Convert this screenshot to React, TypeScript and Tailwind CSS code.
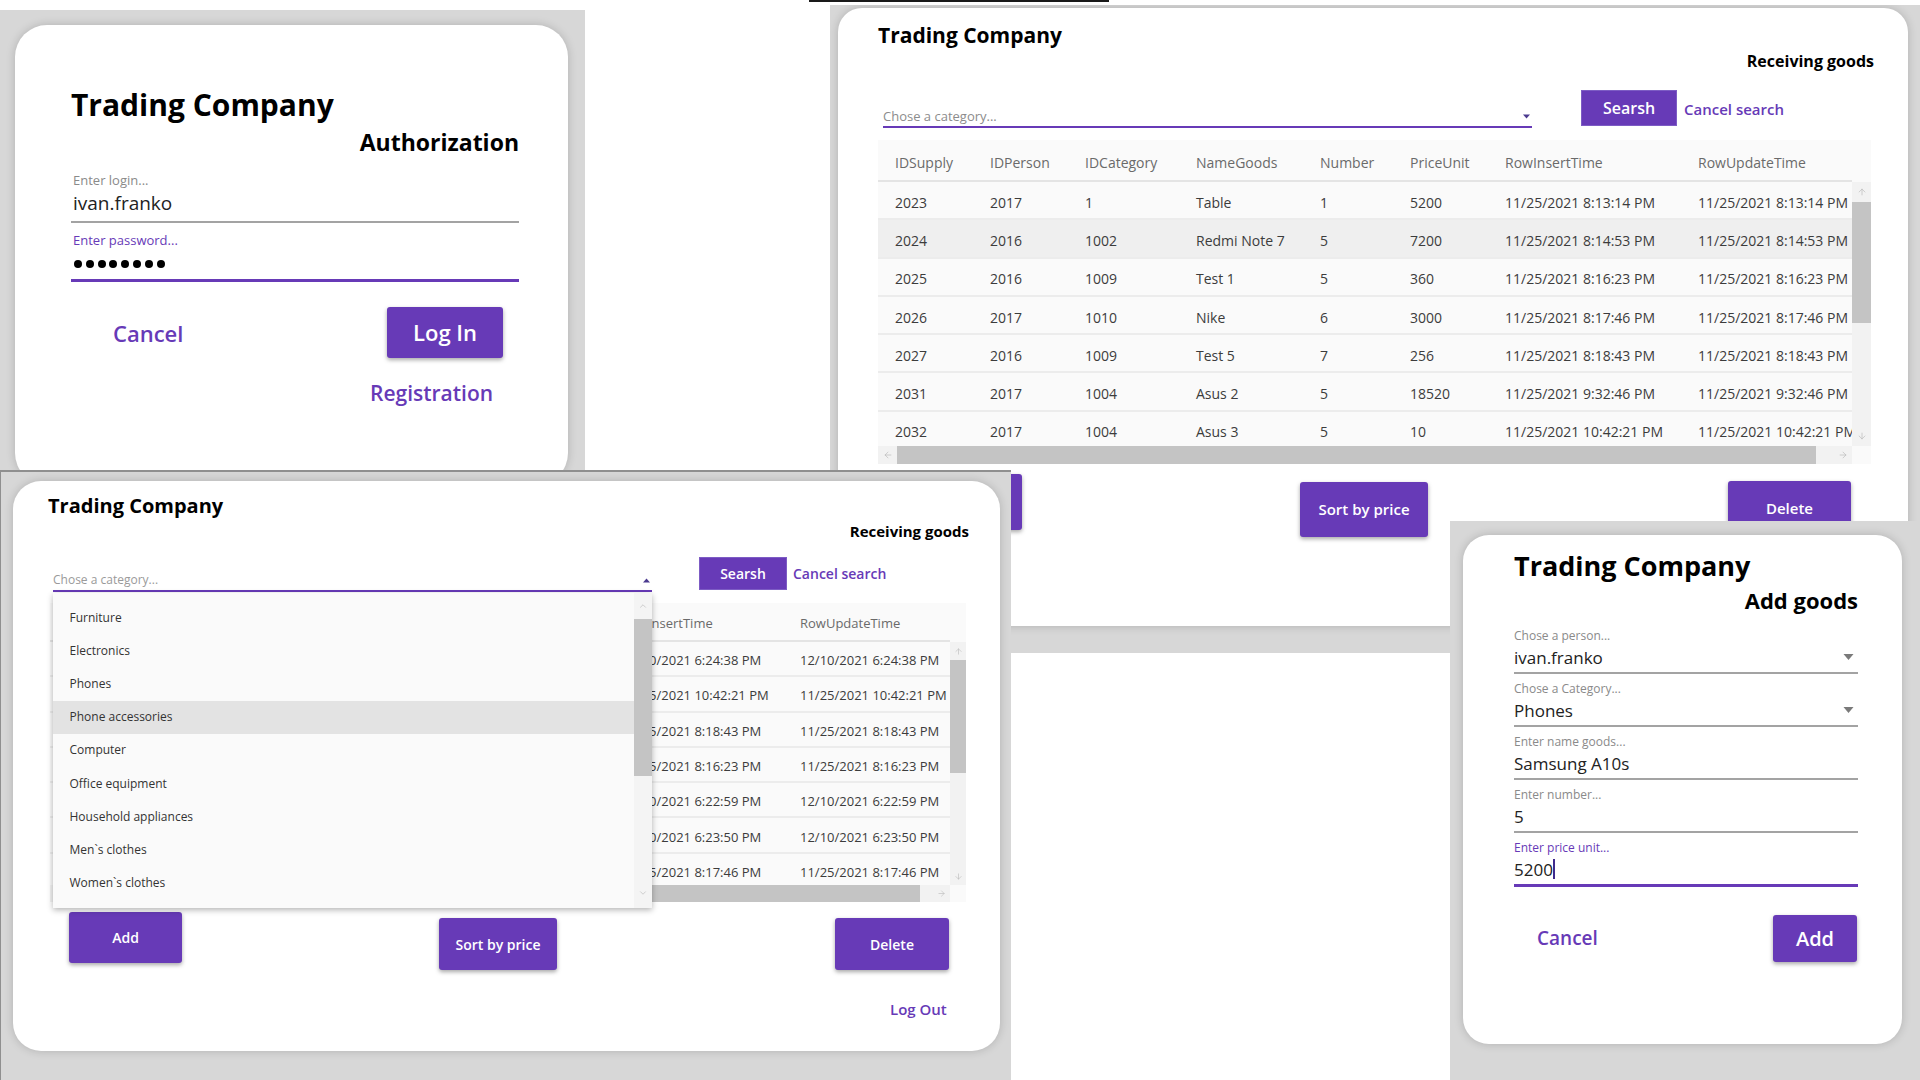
import { ArrowUp, ArrowDown, ArrowLeft, ArrowRight, ChevronUp, ChevronDown } from "lucide-react";

const bigHead = ["IDSupply", "IDPerson", "IDCategory", "NameGoods", "Number", "PriceUnit", "RowInsertTime", "RowUpdateTime"];

const bigRows = [
  ["2023", "2017", "1", "Table", "1", "5200", "11/25/2021 8:13:14 PM", "11/25/2021 8:13:14 PM"],
  ["2024", "2016", "1002", "Redmi Note 7", "5", "7200", "11/25/2021 8:14:53 PM", "11/25/2021 8:14:53 PM"],
  ["2025", "2016", "1009", "Test 1", "5", "360", "11/25/2021 8:16:23 PM", "11/25/2021 8:16:23 PM"],
  ["2026", "2017", "1010", "Nike", "6", "3000", "11/25/2021 8:17:46 PM", "11/25/2021 8:17:46 PM"],
  ["2027", "2016", "1009", "Test 5", "7", "256", "11/25/2021 8:18:43 PM", "11/25/2021 8:18:43 PM"],
  ["2031", "2017", "1004", "Asus 2", "5", "18520", "11/25/2021 9:32:46 PM", "11/25/2021 9:32:46 PM"],
  ["2032", "2017", "1004", "Asus 3", "5", "10", "11/25/2021 10:42:21 PM", "11/25/2021 10:42:21 PM"],
];

// only the two right-hand columns show past the open dropdown
const smallRows = [
  ["12/10/2021 6:24:38 PM", "12/10/2021 6:24:38 PM"],
  ["11/25/2021 10:42:21 PM", "11/25/2021 10:42:21 PM"],
  ["11/25/2021 8:18:43 PM", "11/25/2021 8:18:43 PM"],
  ["11/25/2021 8:16:23 PM", "11/25/2021 8:16:23 PM"],
  ["12/10/2021 6:22:59 PM", "12/10/2021 6:22:59 PM"],
  ["12/10/2021 6:23:50 PM", "12/10/2021 6:23:50 PM"],
  ["11/25/2021 8:17:46 PM", "11/25/2021 8:17:46 PM"],
];

const categories = [
  "Furniture",
  "Electronics",
  "Phones",
  "Phone accessories",
  "Computer",
  "Office equipment",
  "Household appliances",
  "Men`s clothes",
  "Women`s clothes",
];

function Triangle({ up, className }: { up?: boolean; className: string }) {
  return (
    <svg viewBox="0 0 10 6" className={className}>
      <polygon points={up ? "0,6 10,6 5,0" : "0,0 10,0 5,6"} fill="currentColor" />
    </svg>
  );
}

function LoginWindow() {
  return (
    <div className="absolute left-0 top-[10px] w-[585px] h-[460px] bg-[#d7d7d7] overflow-hidden">
      <div className="ml-[15px] mt-[15px] w-[553px] h-[460px] rounded-[32px] bg-white shadow-[0_0_10px_rgba(0,0,0,0.18)] pl-[56px] pr-[49px] pt-[65px]">
        <div className="text-[30px] leading-none font-bold text-black">Trading Company</div>
        <div className="mt-[11px] text-right text-[23px] leading-none font-bold text-black">Authorization</div>
        <div className="mt-[20px] pl-[2px] text-[13px] leading-none text-[#8a8a8a]">Enter login...</div>
        <div className="mt-[7px] pl-[2px] text-[19px] leading-none text-[#222]">ivan.franko</div>
        <div className="mt-[8px] h-[2px] bg-[#a3a3a3]" />
        <div className="mt-[11px] pl-[2px] text-[13px] leading-none text-[#673ab7]">Enter password...</div>
        <div className="mt-[13px] pl-[3px] flex gap-[3.8px]">
          {Array.from({ length: 8 }).map((_, i) => (
            <span key={i} className="w-[8px] h-[8px] rounded-full bg-black" />
          ))}
        </div>
        <div className="mt-[11px] h-[3px] bg-[#673ab7]" />
        <div className="mt-[25px] flex items-center justify-between pl-[42px] pr-[16px]">
          <span className="text-[22px] leading-none font-semibold text-[#673ab7]">Cancel</span>
          <button className="w-[116px] h-[51px] rounded-[3px] bg-[#673ab7] text-white text-[22px] font-semibold shadow-[0_2px_4px_rgba(0,0,0,0.35)]">
            Log In
          </button>
        </div>
        <div className="mt-[25px] ml-[299px] text-[21px] leading-none font-semibold text-[#673ab7]">Registration</div>
      </div>
    </div>
  );
}

function BigTable() {
  return (
    <div className="w-[993px] h-[324px] bg-[#fafafa] flex flex-col">
      <div className="h-[42px] w-[974px] shrink-0 border-b-2 border-[#e4e4e4] grid grid-cols-[95px_95px_111px_124px_90px_95px_193px_1fr] pl-[17px] pt-[5px] items-center text-[14px] text-[#6a6a6a]">
        {bigHead.map((h) => (
          <div key={h} className="whitespace-nowrap leading-[20px]">
            {h}
          </div>
        ))}
      </div>
      <div className="flex h-[264px]">
        <div className="w-[974px] overflow-hidden">
          {bigRows.map((r, i) => (
            <div
              key={i}
              className={`h-[38.3px] border-b-2 border-[#ececec] grid grid-cols-[95px_95px_111px_124px_90px_95px_193px_1fr] pl-[17px] pt-[5px] items-center text-[14px] text-[#3c3c3c] ${
                i === 1 ? "bg-[#efefef]" : ""
              }`}
            >
              {r.map((c, j) => (
                <div key={j} className="whitespace-nowrap leading-[20px]">
                  {c}
                </div>
              ))}
            </div>
          ))}
        </div>
        <div className="w-[19px] bg-[#f2f2f2] flex flex-col items-center">
          <div className="h-[20px] flex items-center justify-center">
            <ArrowUp size={10} strokeWidth={1.5} className="text-[#b5b5b5]" />
          </div>
          <div className="w-[19px] h-[121px] bg-[#c4c4c4]" />
          <div className="flex-1" />
          <div className="h-[20px] flex items-center justify-center">
            <ArrowDown size={10} strokeWidth={1.5} className="text-[#b5b5b5]" />
          </div>
        </div>
      </div>
      <div className="h-[18px] flex bg-[#f2f2f2]">
        <div className="w-[19px] flex items-center justify-center">
          <ArrowLeft size={10} strokeWidth={1.5} className="text-[#b5b5b5]" />
        </div>
        <div className="w-[919px] bg-[#c4c4c4]" />
        <div className="w-[36px] flex items-center justify-end pr-[4px]">
          <ArrowRight size={10} strokeWidth={1.5} className="text-[#b5b5b5]" />
        </div>
        <div className="w-[19px] bg-[#fafafa]" />
      </div>
    </div>
  );
}

function ReceivingBig() {
  return (
    <div className="absolute left-[830px] top-[5px] w-[1090px] h-[648px] bg-[#d7d7d7] overflow-hidden">
      <div className="ml-[8px] mt-[3px] w-[1070px] h-[618px] rounded-[24px] bg-white shadow-[0_0_10px_rgba(0,0,0,0.18)] pl-[40px] pt-[17px]">
        <div className="text-[21px] leading-none font-bold text-black">Trading Company</div>
        <div className="mt-[7px] mr-[34px] text-right text-[16px] leading-none font-bold text-black">Receiving goods</div>
        <div className="mt-[21px] flex h-[38px]">
          <div className="ml-[5px] w-[649px] flex flex-col justify-end">
            <div className="flex items-center justify-between pr-[2px]">
              <span className="text-[13px] leading-none text-[#8c8c8c]">Chose a category...</span>
              <Triangle className="w-[7px] h-[5px] text-[#4b3a8f]" />
            </div>
            <div className="mt-[3.5px] h-[2px] bg-[#673ab7]" />
          </div>
          <button className="ml-[49px] w-[96px] h-[36px] bg-[#673ab7] text-white text-[16px] font-semibold border border-[#7d5cc4]">
            Searsh
          </button>
          <div className="ml-[7px] mt-[11.5px] text-[15px] leading-none font-semibold text-[#673ab7]">Cancel search</div>
        </div>
        <div className="mt-[12px]">
          <BigTable />
        </div>
        <div className="flex items-start">
          <button className="ml-[22px] mt-[10px] w-[122px] h-[56px] rounded-[3px] bg-[#673ab7] text-white text-[15px] font-semibold shadow-[0_2px_4px_rgba(0,0,0,0.35)]">
            Add
          </button>
          <button className="ml-[278px] mt-[18px] w-[128px] h-[55px] rounded-[3px] bg-[#673ab7] text-white text-[15px] font-semibold shadow-[0_2px_4px_rgba(0,0,0,0.35)]">
            Sort by price
          </button>
          <button className="ml-[300px] mt-[17px] w-[123px] h-[55px] rounded-[3px] bg-[#673ab7] text-white text-[15px] font-semibold shadow-[0_2px_4px_rgba(0,0,0,0.35)]">
            Delete
          </button>
        </div>
      </div>
    </div>
  );
}

function SmallTable() {
  return (
    <div className="w-[916px] h-[299px] bg-[#fafafa] flex flex-col">
      <div className="h-[39px] w-[900px] shrink-0 border-b-2 border-[#e4e4e4] grid grid-cols-[178px_1fr] pl-[572px] pt-[3px] items-center text-[13px] text-[#6a6a6a]">
        <div className="whitespace-nowrap leading-[18px]">RowInsertTime</div>
        <div className="whitespace-nowrap leading-[18px]">RowUpdateTime</div>
      </div>
      <div className="flex h-[243px]">
        <div className="w-[900px] overflow-hidden">
          {smallRows.map((r, i) => (
            <div
              key={i}
              className="h-[35.3px] border-b-2 border-[#ececec] grid grid-cols-[178px_1fr] pl-[572px] pt-[3px] items-center text-[13px] text-[#3c3c3c]"
            >
              {r.map((c, j) => (
                <div key={j} className="whitespace-nowrap leading-[18px]">
                  {c}
                </div>
              ))}
            </div>
          ))}
        </div>
        <div className="w-[16px] bg-[#f2f2f2] flex flex-col items-center">
          <div className="h-[18px] flex items-center justify-center">
            <ArrowUp size={9} strokeWidth={1.5} className="text-[#b5b5b5]" />
          </div>
          <div className="w-[16px] h-[113px] bg-[#c4c4c4]" />
          <div className="flex-1" />
          <div className="h-[18px] flex items-center justify-center">
            <ArrowDown size={9} strokeWidth={1.5} className="text-[#b5b5b5]" />
          </div>
        </div>
      </div>
      <div className="h-[17px] flex bg-[#f2f2f2]">
        <div className="w-[17px] flex items-center justify-center">
          <ArrowLeft size={9} strokeWidth={1.5} className="text-[#b5b5b5]" />
        </div>
        <div className="w-[853px] bg-[#c4c4c4]" />
        <div className="w-[30px] flex items-center justify-end pr-[4px]">
          <ArrowRight size={9} strokeWidth={1.5} className="text-[#b5b5b5]" />
        </div>
        <div className="w-[16px] bg-[#fafafa]" />
      </div>
    </div>
  );
}

function CategoryDropdown() {
  return (
    <div className="absolute left-[40px] top-[112px] w-[599px] h-[315px] bg-[#fafafa] shadow-[0_2px_6px_rgba(0,0,0,0.3)] flex">
      <div className="flex-1 pt-[8.5px]">
        {categories.map((c, i) => (
          <div
            key={c}
            className={`h-[33.1px] flex items-center pl-[16.5px] text-[12px] text-[#333] ${i === 3 ? "bg-[#e3e3e3]" : ""}`}
          >
            {c}
          </div>
        ))}
      </div>
      <div className="w-[18px] bg-[#f4f4f4] flex flex-col items-center">
        <div className="h-[26px] flex items-center justify-center">
          <ChevronUp size={10} strokeWidth={1.5} className="text-[#b5b5b5]" />
        </div>
        <div className="w-[18px] h-[157px] bg-[#c4c4c4]" />
        <div className="flex-1" />
        <div className="h-[30px] flex items-center justify-center">
          <ChevronDown size={10} strokeWidth={1.5} className="text-[#b5b5b5]" />
        </div>
      </div>
    </div>
  );
}

function ReceivingSmall() {
  return (
    <div className="absolute left-0 top-[470px] w-[1011px] h-[610px] bg-[#d7d7d7] border-t-2 border-l border-[#8f8f8f] overflow-hidden">
      <div className="relative ml-[12px] mt-[9px] w-[987px] h-[570px] rounded-[28px] bg-white shadow-[0_0_10px_rgba(0,0,0,0.18)] pl-[35px] pt-[15px]">
        <div className="text-[20px] leading-none font-bold text-black">Trading Company</div>
        <div className="mt-[7.5px] mr-[31px] text-right text-[15px] leading-none font-bold text-black">Receiving goods</div>
        <div className="mt-[18.5px] flex h-[35px]">
          <div className="ml-[5px] w-[599px] flex flex-col justify-end">
            <div className="flex items-center justify-between pr-[2px]">
              <span className="text-[12px] leading-none text-[#9a9a9a]">Chose a category...</span>
              <Triangle up className="w-[7px] h-[5px] text-[#4b3a8f]" />
            </div>
            <div className="mt-[4px] h-[2px] bg-[#673ab7]" />
          </div>
          <button className="ml-[47px] w-[88px] h-[33px] bg-[#673ab7] text-white text-[14px] font-semibold border border-[#7d5cc4]">
            Searsh
          </button>
          <div className="ml-[6px] mt-[10px] text-[14px] leading-none font-semibold text-[#673ab7]">Cancel search</div>
        </div>
        <div className="mt-[11px] ml-[2px]">
          <SmallTable />
        </div>
        <div className="flex items-start">
          <button className="ml-[21px] mt-[10px] w-[113px] h-[51px] rounded-[3px] bg-[#673ab7] text-white text-[14px] font-semibold shadow-[0_2px_4px_rgba(0,0,0,0.35)]">
            Add
          </button>
          <button className="ml-[257px] mt-[16px] w-[118px] h-[52px] rounded-[3px] bg-[#673ab7] text-white text-[14px] font-semibold shadow-[0_2px_4px_rgba(0,0,0,0.35)]">
            Sort by price
          </button>
          <button className="ml-[278px] mt-[16px] w-[114px] h-[52px] rounded-[3px] bg-[#673ab7] text-white text-[14px] font-semibold shadow-[0_2px_4px_rgba(0,0,0,0.35)]">
            Delete
          </button>
        </div>
        <div className="mt-[32px] ml-[842px] text-[15px] leading-none font-semibold text-[#673ab7]">Log Out</div>
        <CategoryDropdown />
      </div>
    </div>
  );
}

function Field({
  label,
  value,
  active,
  select,
  caret,
}: {
  label: string;
  value: string;
  active?: boolean;
  select?: boolean;
  caret?: boolean;
}) {
  return (
    <div className="mb-[9px]">
      <div className={`text-[12px] leading-none ${active ? "text-[#673ab7]" : "text-[#8a8a8a]"}`}>{label}</div>
      <div className="mt-[6.5px] flex items-center justify-between h-[17px]">
        <span className="flex items-center text-[17px] leading-none text-[#222]">
          {value}
          {caret ? <span className="inline-block w-[2px] h-[20px] bg-[#3f2a8c]" /> : null}
        </span>
        {select ? <Triangle className="w-[11px] h-[6px] mr-[4px] text-[#7a7a7a]" /> : null}
      </div>
      <div className={`mt-[6.5px] ${active ? "h-[3px] bg-[#673ab7]" : "h-[2px] bg-[#a3a3a3]"}`} />
    </div>
  );
}

function AddGoodsWindow() {
  return (
    <div className="absolute left-[1450px] top-[521px] w-[470px] h-[559px] bg-[#d7d7d7] overflow-hidden">
      <div className="ml-[13px] mt-[14px] w-[439px] h-[509px] rounded-[26px] bg-white shadow-[0_0_10px_rgba(0,0,0,0.18)] pl-[51px] pr-[44px] pt-[17px]">
        <div className="text-[27px] leading-none font-bold text-black">Trading Company</div>
        <div className="mt-[10px] text-right text-[22px] leading-none font-bold text-black">Add goods</div>
        <div className="mt-[19px]">
          <Field label="Chose a person..." value="ivan.franko" select />
          <Field label="Chose a Category..." value="Phones" select />
          <Field label="Enter name goods..." value="Samsung A10s" />
          <Field label="Enter number..." value="5" />
          <Field label="Enter price unit..." value="5200" active caret />
        </div>
        <div className="mt-[28px] flex items-center justify-between pl-[23px] pr-[1px]">
          <span className="text-[19px] leading-none font-semibold text-[#673ab7]">Cancel</span>
          <button className="w-[84px] h-[47px] rounded-[3px] bg-[#673ab7] text-white text-[20px] font-semibold shadow-[0_2px_4px_rgba(0,0,0,0.35)]">
            Add
          </button>
        </div>
      </div>
    </div>
  );
}

export default function App() {
  return (
    <div className="relative w-[1920px] h-[1080px] overflow-hidden bg-white font-['Open_Sans',sans-serif]">
      <ReceivingBig />
      <LoginWindow />
      <ReceivingSmall />
      <AddGoodsWindow />
      <div className="absolute left-[809px] top-0 w-[300px] h-[2px] bg-[#1a1a1a]" />
    </div>
  );
}
